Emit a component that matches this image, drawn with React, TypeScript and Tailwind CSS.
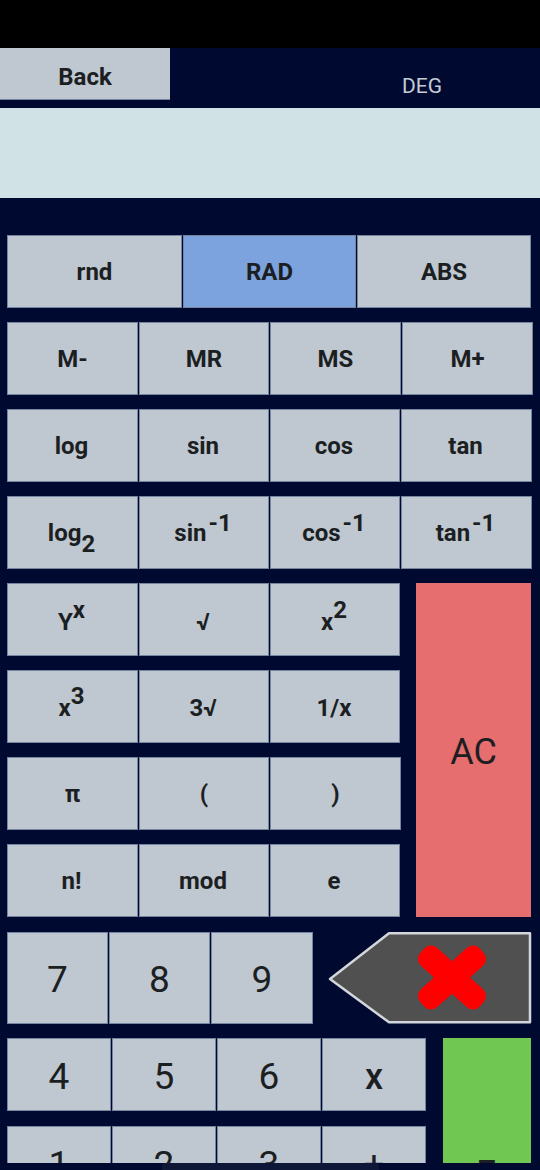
import type { ReactNode } from 'react';

type KeyProps = {
  children?: ReactNode;
  className?: string;
  bg?: string;
  edge?: string;
};

const Key = ({ children, className = '', bg = 'bg-[#bfc7d1]', edge = 'border-[#76859f]' }: KeyProps) => (
  <button
    className={`flex shrink-0 items-center justify-center border text-[#1c1f22] ${bg} ${edge} ${className}`}
  >
    {children}
  </button>
);

const Sup = ({ children, tight = false }: { children: ReactNode; tight?: boolean }) => (
  <span className={`relative leading-none ${tight ? 'top-[-12px]' : 'top-[-10px] ml-[2px]'}`}>{children}</span>
);

const Sub = ({ children }: { children: ReactNode }) => (
  <span className="relative top-[11px] leading-none">{children}</span>
);

const Row = ({ labels, widths, pad = 'pt-px' }: { labels: ReactNode[]; widths: string[]; pad?: string }) => (
  <div className="flex h-[73px] gap-px">
    {labels.map((label, i) => (
      <Key key={i} className={`${widths[i]} h-full text-[24px] font-bold ${pad}`}>
        {label}
      </Key>
    ))}
  </div>
);

const wideRow = ['w-[131px]', 'w-[130px]', 'w-[131px]', 'w-[131px]'];
const narrowRow = ['w-[131px]', 'w-[130px]', 'w-[130px]', 'w-[131px]'];
const sideRow = ['w-[131px]', 'w-[130px]', 'w-[130px]'];
const sideRowWide = ['w-[131px]', 'w-[130px]', 'w-[131px]'];

export default function App() {
  return (
    <div className="relative h-[1170px] w-[540px] overflow-hidden bg-[#000a30] font-['Roboto',sans-serif]">
      <div className="flex h-[1163px] flex-col overflow-hidden">
        <div className="h-12 shrink-0 bg-black" />

        <div className="flex h-[60px] shrink-0">
          <button className="flex h-[52px] w-[170px] items-center justify-center border-b border-[#76859f] bg-[#bfc7d1] pt-[6px] text-[24px] font-bold text-[#1c1f22]">
            Back
          </button>
          <div className="pl-[232px] pt-[25px] text-[21px] leading-[26px] text-[#c5ccd6]">DEG</div>
        </div>

        <div className="h-[90px] shrink-0 bg-[#d0e2e6]" />

        <div className="flex flex-col pl-[7px] pt-[37px]">
          <div className="flex h-[73px] gap-px">
            <Key className="w-[175px] pt-px text-[24px] font-bold">rnd</Key>
            <Key bg="bg-[#7ca3de]" className="w-[173px] pt-px text-[24px] font-bold">RAD</Key>
            <Key className="w-[174px] pt-px text-[24px] font-bold">ABS</Key>
          </div>

          <div className="mt-[14px] flex flex-col gap-[14px]">
            <Row labels={['M-', 'MR', 'MS', 'M+']} widths={wideRow} />
            <Row labels={['log', 'sin', 'cos', 'tan']} widths={narrowRow} pad="pt-px pr-[2px]" />
            <Row
              widths={narrowRow}
              pad="pr-[2px]"
              labels={[
                <span>log<Sub>2</Sub></span>,
                <span>sin<Sup>-1</Sup></span>,
                <span>cos<Sup>-1</Sup></span>,
                <span>tan<Sup>-1</Sup></span>,
              ]}
            />
          </div>

          <div className="mt-[14px] flex gap-[17px]">
            <div className="flex w-[392px] flex-col gap-[14px]">
              <Row
                widths={sideRow}
                pad="pt-[4px] pr-[2px]"
                labels={[
                  <span>Y<Sup tight>x</Sup></span>,
                  <span>√</span>,
                  <span>x<Sup tight>2</Sup></span>,
                ]}
              />
              <Row
                widths={sideRow}
                pad="pt-[3px] pr-[2px]"
                labels={[<span>x<Sup tight>3</Sup></span>, <span>3√</span>, <span>1/x</span>]}
              />
              <Row widths={sideRowWide} labels={['π', '(', ')']} />
              <Row widths={sideRow} pad="pt-px pr-[2px]" labels={['n!', 'mod', 'e']} />
            </div>
            <Key bg="bg-[#e66e6e]" edge="border-[#e66e6e]" className="h-[334px] w-[115px] pt-[4px] text-[36px]">AC</Key>
          </div>

          <div className="mt-[15px] flex">
            <div className="flex h-[92px] gap-px">
              <Key className="h-full w-[101px] pt-[4px] text-[37px]">7</Key>
              <Key className="h-full w-[101px] pt-[4px] text-[37px]">8</Key>
              <Key className="h-full w-[102px] pt-[4px] text-[37px]">9</Key>
            </div>
            <svg className="ml-[15px] shrink-0" width="204" height="92" viewBox="0 0 204 92">
              <path d="M2 47 L61 1.2 H202 V90.3 H61 Z" fill="#505050" stroke="#d3d6da" strokeWidth="2.5" strokeLinejoin="round" />
              <g transform="translate(124 45.5)" fill="#ff0000">
                <rect x="-40" y="-12" width="80" height="24" rx="9" transform="rotate(42)" />
                <rect x="-40" y="-12" width="80" height="24" rx="9" transform="rotate(-42)" />
              </g>
            </svg>
          </div>

          <div className="mt-[14px] flex gap-[17px]">
            <div className="flex w-[419px] flex-col gap-[15px]">
              <div className="flex h-[73px] gap-px">
                {['4', '5', '6'].map((n) => (
                  <Key key={n} className="h-full w-[104px] pt-[5px] text-[37px]">{n}</Key>
                ))}
                <Key className="h-full w-[104px] pt-[5px] text-[36px] font-medium">x</Key>
              </div>
              <div className="flex h-[73px] gap-px">
                {['1', '2', '3', '+'].map((n) => (
                  <Key key={n} className="h-full w-[104px] pt-[5px] text-[37px]">{n}</Key>
                ))}
              </div>
            </div>
            <Key bg="bg-[#70c853]" edge="border-[#70c853]" className="h-[250px] w-[88px] pt-[4px] text-[37px] font-medium">=</Key>
          </div>
        </div>
      </div>

      <div className="absolute bottom-0 left-[162px] h-[7px] w-[217px] rounded-t-sm bg-[#0f1738]" />
    </div>
  );
}
